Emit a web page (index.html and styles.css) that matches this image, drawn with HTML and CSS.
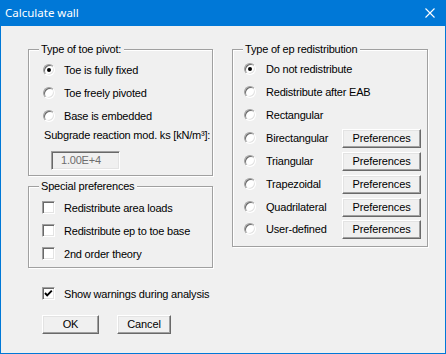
FILE: index.html
```html
<!DOCTYPE html>
<html lang="en">
<head>
    <meta charset="UTF-8">
    <title>Calculate wall</title>
    <link rel="stylesheet" href="styles.css">
</head>
<body>
    <div class="window">
        <div class="titlebar">
            <span class="title">Calculate wall</span>
            <svg class="close" width="10" height="10" viewBox="0 0 10 10">
                <path d="M0.5 0.5 L9.5 9.5 M9.5 0.5 L0.5 9.5" stroke="#fff" stroke-width="1.1" fill="none"/>
            </svg>
        </div>

        <div class="content">
            <div class="columns">
                <div class="left-col">
                    <!-- Type of toe pivot -->
                    <div class="group pivot">
                        <span class="group-title">Type of toe pivot:</span>
                        <div class="row"><span class="radio checked"></span><span class="label">Toe is fully fixed</span></div>
                        <div class="row"><span class="radio"></span><span class="label">Toe freely pivoted</span></div>
                        <div class="row"><span class="radio"></span><span class="label">Base is embedded</span></div>
                        <div class="subgrade">Subgrade reaction mod. ks [kN/m³]:</div>
                        <div class="edit disabled">1.00E+4</div>
                    </div>

                    <!-- Special preferences -->
                    <div class="group special">
                        <span class="group-title">Special preferences</span>
                        <div class="row"><span class="check"></span><span class="label">Redistribute area loads</span></div>
                        <div class="row"><span class="check"></span><span class="label">Redistribute ep to toe base</span></div>
                        <div class="row"><span class="check"></span><span class="label">2nd order theory</span></div>
                    </div>
                </div>

                <!-- Type of ep redistribution -->
                <div class="group redist">
                    <span class="group-title">Type of ep redistribution</span>
                    <div class="row"><span class="radio checked"></span><span class="label">Do not redistribute</span></div>
                    <div class="row"><span class="radio"></span><span class="label">Redistribute after EAB</span></div>
                    <div class="row"><span class="radio"></span><span class="label">Rectangular</span></div>
                    <div class="row"><span class="radio"></span><span class="label wide">Birectangular</span><button class="btn pref">Preferences</button></div>
                    <div class="row"><span class="radio"></span><span class="label wide">Triangular</span><button class="btn pref">Preferences</button></div>
                    <div class="row"><span class="radio"></span><span class="label wide">Trapezoidal</span><button class="btn pref">Preferences</button></div>
                    <div class="row"><span class="radio"></span><span class="label wide">Quadrilateral</span><button class="btn pref">Preferences</button></div>
                    <div class="row"><span class="radio"></span><span class="label wide">User-defined</span><button class="btn pref">Preferences</button></div>
                </div>
            </div>

            <div class="row warnings">
                <span class="check">
                    <svg width="11" height="11" viewBox="0 0 11 11">
                        <path d="M2 5 L4.2 7.4 L8.8 2.6" stroke="#000" stroke-width="1.9" fill="none"/>
                    </svg>
                </span>
                <span class="label">Show warnings during analysis</span>
            </div>

            <div class="actions">
                <button class="btn ok">OK</button>
                <button class="btn cancel">Cancel</button>
            </div>
        </div>
    </div>
</body>
</html>
```

FILE: styles.css
```css
* {
    margin: 0;
    padding: 0;
    box-sizing: border-box;
}

body {
    width: 446px;
    height: 354px;
    background: #f0f0f0;
    font-family: 'Liberation Sans', Arial, sans-serif;
    font-size: 11px;
    letter-spacing: -0.2px;
    color: #000;
    overflow: hidden;
}

.window {
    width: 446px;
    height: 354px;
    border: 1px solid #0078d7;
    border-top: none;
    background: #f0f0f0;
    display: flex;
    flex-direction: column;
}

.titlebar {
    height: 26px;
    margin: 0 -1px;
    background: #0078d7;
    color: #fff;
    display: flex;
    align-items: center;
    justify-content: space-between;
    padding: 0 11px 1px 5px;
    flex-shrink: 0;
}

.title {
    font-family: 'Noto Sans', 'Open Sans', sans-serif;
    font-size: 11.5px;
    letter-spacing: 0;
}

.close {
    display: block;
    margin-top: 1px;
}

.content {
    flex: 1;
    padding: 23px 0 0 27px;
}

.columns {
    display: flex;
    align-items: flex-start;
    gap: 19px;
    height: 219px;
}

.left-col {
    display: flex;
    flex-direction: column;
    gap: 10px;
}

/* etched group box */
.group {
    position: relative;
    border: 1px solid #a0a0a0;
    box-shadow: inset 1px 1px 0 #fff, 1px 1px 0 #fff;
}

.group-title {
    position: absolute;
    top: -7px;
    left: 10px;
    padding: 0 3px 0 2px;
    background: #f0f0f0;
    line-height: 13px;
}

.pivot {
    width: 185px;
    height: 127px;
    padding: 8px 0 0 14px;
}

.special {
    width: 185px;
    height: 82px;
    padding: 9px 0 0 13px;
}

.redist {
    width: 196px;
    height: 198px;
    padding: 8px 0 0 11px;
}

.row {
    display: flex;
    align-items: center;
    height: 23px;
}

.redist .row {
    height: 22.86px;
}

.label {
    line-height: 14px;
    white-space: nowrap;
}

.label.wide {
    width: 76px;
}

.radio {
    width: 12px;
    height: 12px;
    border-radius: 50%;
    border: 1px solid;
    border-color: #a0a0a0 #fff #fff #a0a0a0;
    box-shadow: inset 1px 1px 0 #696969, inset -1px -1px 0 #e3e3e3;
    background: #fff;
    margin-right: 9px;
    flex-shrink: 0;
    display: flex;
    align-items: center;
    justify-content: center;
}

.redist .radio {
    margin-right: 10px;
}

.radio.checked::after {
    content: "";
    width: 4px;
    height: 4px;
    border-radius: 50%;
    background: #000;
}

.check {
    width: 13px;
    height: 13px;
    border: 1px solid;
    border-color: #a0a0a0 #fff #fff #a0a0a0;
    box-shadow: inset 1px 1px 0 #696969, inset -1px -1px 0 #e3e3e3;
    background: #fff;
    margin-right: 9px;
    flex-shrink: 0;
    display: flex;
    align-items: center;
    justify-content: center;
}

.check svg {
    display: block;
}

.subgrade {
    height: 16px;
    line-height: 16px;
    margin-left: 1px;
    white-space: nowrap;
}

.edit {
    width: 69px;
    height: 19px;
    margin: 8px 0 0 8px;
    border: 1px solid;
    border-color: #a0a0a0 #fff #fff #a0a0a0;
    box-shadow: inset 1px 1px 0 #696969, inset -1px -1px 0 #e3e3e3;
    padding-left: 9px;
    line-height: 17px;
}

.edit.disabled {
    background: #f0f0f0;
    color: #6d6d6d;
}

.btn {
    font-family: 'Liberation Sans', Arial, sans-serif;
    font-size: 11px;
    letter-spacing: -0.1px;
    color: #000;
    background: #f0f0f0;
    border: 1px solid;
    border-color: #fff #696969 #696969 #fff;
    box-shadow: inset -1px -1px 0 #a0a0a0, inset 1px 1px 0 #e3e3e3;
    height: 19px;
    padding: 0 0 1px;
    line-height: 16px;
    text-align: center;
}

.pref {
    width: 79px;
    margin-top: 1px;
}

.warnings {
    margin: 14px 0 0 14px;
}

.actions {
    display: flex;
    gap: 18px;
    margin: 10px 0 0 14px;
}

.ok {
    width: 57px;
}

.cancel {
    width: 54px;
}
```
